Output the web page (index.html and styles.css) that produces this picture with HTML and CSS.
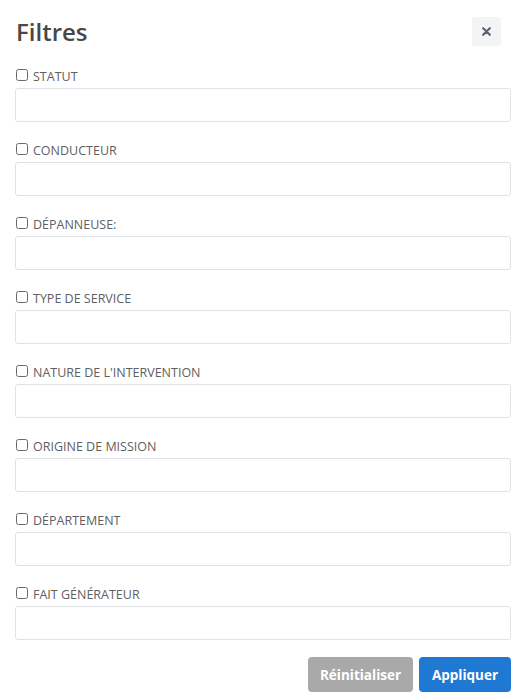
FILE: index.html
```html
<!DOCTYPE html>
<html lang="fr">
<head>
<meta charset="utf-8">
<link rel="stylesheet" href="styles.css">
</head>
<body>
<div class="modal">
  <div class="header">
    <h1 class="title">Filtres</h1>
    <button class="close" type="button" aria-label="Fermer"><svg width="9" height="9" viewBox="0 0 9 9"><path d="M1.2 1.2 L7.8 7.8 M7.8 1.2 L1.2 7.8" stroke="#5f6170" stroke-width="2.2" stroke-linecap="round"/></svg></button>
  </div>
  <div class="fields">
    <div class="field"><label class="lbl"><input type="checkbox" class="cb"><span>STATUT</span></label><div class="box"></div></div>
    <div class="field"><label class="lbl"><input type="checkbox" class="cb"><span>CONDUCTEUR</span></label><div class="box"></div></div>
    <div class="field"><label class="lbl"><input type="checkbox" class="cb"><span>DÉPANNEUSE:</span></label><div class="box"></div></div>
    <div class="field"><label class="lbl"><input type="checkbox" class="cb"><span>TYPE DE SERVICE</span></label><div class="box"></div></div>
    <div class="field"><label class="lbl"><input type="checkbox" class="cb"><span>NATURE DE L'INTERVENTION</span></label><div class="box"></div></div>
    <div class="field"><label class="lbl"><input type="checkbox" class="cb"><span>ORIGINE DE MISSION</span></label><div class="box"></div></div>
    <div class="field"><label class="lbl"><input type="checkbox" class="cb"><span>DÉPARTEMENT</span></label><div class="box"></div></div>
    <div class="field"><label class="lbl"><input type="checkbox" class="cb"><span>FAIT GÉNÉRATEUR</span></label><div class="box"></div></div>
  </div>
  <div class="actions">
    <button class="btn btn-reset" type="button">Réinitialiser</button>
    <button class="btn btn-apply" type="button">Appliquer</button>
  </div>
</div>
</body>
</html>
```
FILE: styles.css
```css
html, body {
  margin: 0;
  padding: 0;
  background: #ffffff;
}
body {
  font-family: "Open Sans", "Liberation Sans", sans-serif;
  color: #555;
}
.modal {
  width: 524px;
  box-sizing: border-box;
  padding: 0 13px 0 15px;
}
.header {
  display: flex;
  justify-content: space-between;
  align-items: flex-start;
  height: 67px;
}
.title {
  margin: 15px 0 0 1px;
  font-size: 24px;
  font-weight: 600;
  line-height: 33px;
  color: #484848;
}
.close {
  margin-top: 17px;
  margin-right: 10px;
  width: 29px;
  height: 29px;
  border: none;
  border-radius: 3px;
  background: #f3f4f6;
  padding: 0;
  display: flex;
  align-items: center;
  justify-content: center;
}
.fields {
  display: flex;
  flex-direction: column;
  gap: 19px;
}
.field {
  display: flex;
  flex-direction: column;
  gap: 3px;
}
.lbl {
  display: flex;
  align-items: center;
  height: 18px;
  font-size: 12.5px;
  color: #606060;
  gap: 5px;
}
.cb {
  appearance: none;
  -webkit-appearance: none;
  margin: 0 0 0 1px;
  width: 12px;
  height: 12px;
  border: 1px solid #6a6a6a;
  border-radius: 2.5px;
  box-sizing: border-box;
  background: #fff;
  position: relative;
  top: -1px;
}
.box {
  height: 34px;
  box-sizing: border-box;
  border: 1px solid #dfe3e6;
  border-radius: 3px;
  background: #fff;
}
.actions {
  display: flex;
  justify-content: flex-end;
  gap: 6px;
  margin-top: 17px;
}
.btn {
  height: 35px;
  border: none;
  border-radius: 4px;
  color: #fff;
  font-family: "Open Sans", "Liberation Sans", sans-serif;
  font-weight: 700;
  font-size: 13.5px;
  padding: 0 11px;
}
.btn-reset {
  background: #a9a9a9;
  width: 105px;
}
.btn-apply {
  background: #1f78d1;
  width: 92px;
}
```
